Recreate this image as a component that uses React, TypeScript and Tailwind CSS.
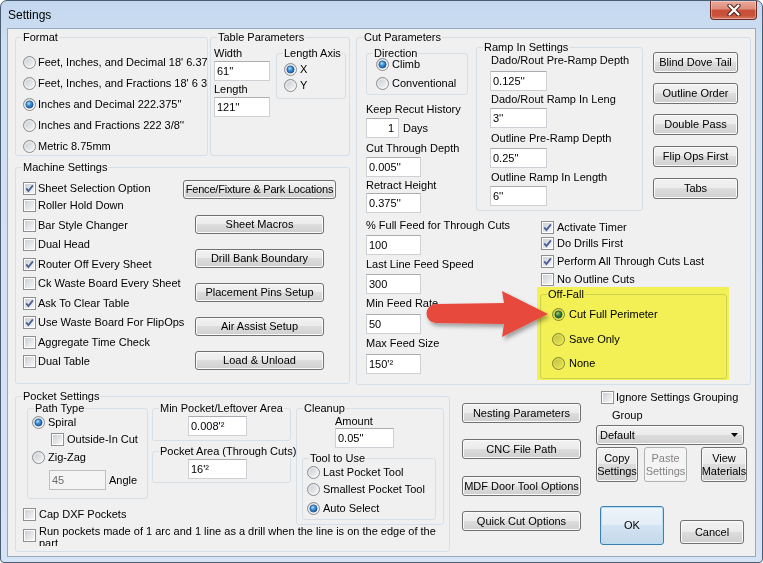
import React from "react";

const BTN =
  "border-[#707070] bg-[linear-gradient(to_bottom,#f2f2f2_0%,#ebebeb_49%,#dddddd_50%,#cfcfcf_100%)] shadow-[inset_0_0_0_1px_#fbfbfb]";

function Radio({ on }: { on?: boolean }) {
  return (
    <svg width="13" height="13" viewBox="0 0 13 13" className="shrink-0">
      <circle cx="6.5" cy="6.5" r="6" fill="url(#rbg)" stroke="#8b8e92" />
      <circle cx="6.5" cy="6.5" r="4.6" fill="none" stroke="#ffffff" strokeOpacity="0.6" />
      {on && <circle cx="6.5" cy="6.5" r="3.6" fill="url(#rdot)" stroke="#1d4e86" strokeWidth="0.7" />}
    </svg>
  );
}

function Check({ on }: { on?: boolean }) {
  return (
    <svg width="13" height="13" viewBox="0 0 13 13" className="shrink-0">
      <rect x="0.5" y="0.5" width="12" height="12" fill="#fff" stroke="#8e8f8f" />
      <rect x="2" y="2" width="9" height="9" fill="url(#cbg)" />
      {on && <path d="M3.2 6.4 L5.4 9 L9.9 3.4" stroke="#4a5f97" strokeWidth="1.8" fill="none" />}
    </svg>
  );
}

function Group({ label, className = "", children }: { label: string; className?: string; children?: React.ReactNode }) {
  return (
    <fieldset className={`min-w-0 shrink-0 border border-[#d5dfe5] rounded-[3px] ${className}`}>
      <legend className="ml-[6px] px-[1px] leading-[13px] whitespace-nowrap">{label}</legend>
      {children}
    </fieldset>
  );
}

function RadioRow({ label, on, className = "", gap = "ml-[3px]" }: { label: string; on?: boolean; className?: string; gap?: string }) {
  return (
    <div className={`flex items-center h-[16px] whitespace-nowrap ${className}`}>
      <Radio on={on} />
      <span className={`leading-[13px] ${gap}`}>{label}</span>
    </div>
  );
}

function CheckRow({ label, on, className = "", gap = "ml-[3px]" }: { label: string; on?: boolean; className?: string; gap?: string }) {
  return (
    <div className={`flex items-center h-[16px] whitespace-nowrap ${className}`}>
      <Check on={on} />
      <span className={`leading-[13px] ${gap}`}>{label}</span>
    </div>
  );
}

function Btn({ children, className = "", disabled, focus }: { children: React.ReactNode; className?: string; disabled?: boolean; focus?: boolean }) {
  const skin = disabled
    ? "border-[#adb2b5] bg-[#f4f4f4] text-[#838383]"
    : focus
    ? "border-[#3c7fb1] bg-[linear-gradient(to_bottom,#edf4fa_0%,#e3edf6_49%,#d3e3f1_50%,#c4d9ea_100%)] shadow-[inset_0_0_0_1px_#b6def5]"
    : BTN;
  return (
    <button type="button" className={`shrink-0 flex items-center justify-center text-center leading-[13px] rounded-[3px] border ${skin} ${className}`}>
      {children}
    </button>
  );
}

function Field({ value, className = "", disabled, right }: { value: string; className?: string; disabled?: boolean; right?: boolean }) {
  const skin = disabled ? "bg-[#f4f4f4] text-[#6d6d6d] border-[#bcc0c5]" : "bg-white border-[#cdd1d6] border-t-[#abadb3]";
  return (
    <div className={`shrink-0 h-[20px] flex items-center border whitespace-nowrap ${skin} ${right ? "justify-end pr-[4px]" : "pl-[2px]"} ${className}`}>
      {value}
    </div>
  );
}

const machineChecks: [string, boolean, string][] = [
  ["Sheet Selection Option", true, "mt-[6px]"],
  ["Roller Hold Down", false, "mt-[1px]"],
  ["Bar Style Changer", false, "mt-[4px]"],
  ["Dual Head", false, "mt-[3px]"],
  ["Router Off Every Sheet", true, "mt-[4px]"],
  ["Ck Waste Board Every Sheet", false, "mt-[3px]"],
  ["Ask To Clear Table", true, "mt-[4px]"],
  ["Use Waste Board For FlipOps", true, "mt-[3px]"],
  ["Aggregate Time Check", false, "mt-[4px]"],
  ["Dual Table", false, "mt-[3px]"],
];

const machineButtons: [string, string][] = [
  ["Sheet Macros", "mt-[16px]"],
  ["Drill Bank Boundary", "mt-[15px]"],
  ["Placement Pins Setup", "mt-[15px]"],
  ["Air Assist Setup", "mt-[15px]"],
  ["Load & Unload", "mt-[15px]"],
];

const cutFields: [string, string, string, string][] = [
  ["Cut Through Depth", "mt-[4px]", "0.005''", "mt-[2px]"],
  ["Retract Height", "mt-[2px]", "0.375''", "mt-[1px]"],
  ["% Full Feed for Through Cuts", "mt-[6px]", "100", "mt-[3px]"],
  ["Last Line Feed Speed", "mt-[3px]", "300", "mt-[3px]"],
  ["Min Feed Rate", "mt-[3px]", "50", "mt-[4px]"],
  ["Max Feed Size", "mt-[3px]", "150'²", "mt-[4px]"],
];

const rampFields: [string, string, string, string][] = [
  ["Dado/Rout Pre-Ramp Depth", "mt-[0px]", "0.125''", "mt-[4px]"],
  ["Dado/Rout Ramp In Leng", "mt-[2px]", "3''", "mt-[2px]"],
  ["Outline Pre-Ramp Depth", "mt-[4px]", "0.25''", "mt-[3px]"],
  ["Outline Ramp In Length", "mt-[3px]", "6''", "mt-[2px]"],
];

const cutButtons: [string, string][] = [
  ["Blind Dove Tail", "mt-[8px]"],
  ["Outline Order", "mt-[10px]"],
  ["Double Pass", "mt-[10px]"],
  ["Flip Ops First", "mt-[11px]"],
  ["Tabs", "mt-[11px]"],
];

const cutChecks: [string, boolean, string][] = [
  ["Activate Timer", true, "mt-[8px]"],
  ["Do Drills First", true, "mt-[0px]"],
  ["Perform All Through Cuts Last", true, "mt-[2px]"],
  ["No Outline Cuts", false, "mt-[2px]"],
];

const sideButtons: [string, string][] = [
  ["Nesting Parameters", "mt-[13px]"],
  ["CNC File Path", "mt-[16px]"],
  ["MDF Door Tool Options", "mt-[17px]"],
  ["Quick Cut Options", "mt-[15px]"],
];

export default function App() {
  return (
    <div className="relative w-[763px] h-[563px] overflow-hidden bg-white font-['Liberation_Sans',Arial,sans-serif] text-[11px] text-black">
      <svg className="absolute w-0 h-0">
        <defs>
          <linearGradient id="rbg" x1="0" y1="0" x2="1" y2="1">
            <stop offset="0" stopColor="#c3c7cc" />
            <stop offset="1" stopColor="#fbfbfb" />
          </linearGradient>
          <radialGradient id="rdot" cx="0.4" cy="0.35" r="0.7">
            <stop offset="0" stopColor="#b9e2fb" />
            <stop offset="0.45" stopColor="#3a8fd8" />
            <stop offset="1" stopColor="#1a559c" />
          </radialGradient>
          <linearGradient id="cbg" x1="0" y1="0" x2="1" y2="1">
            <stop offset="0" stopColor="#cbcfd5" />
            <stop offset="1" stopColor="#f7f7f7" />
          </linearGradient>
          <filter id="shadow" x="-10%" y="-10%" width="130%" height="140%">
            <feDropShadow dx="2" dy="3" stdDeviation="2" floodColor="#000" floodOpacity="0.35" />
          </filter>
        </defs>
      </svg>

      {/* window frame */}
      <div className="w-full h-full flex flex-col rounded-t-[7px] rounded-b-[4px] border border-[#4a5c71] bg-[linear-gradient(to_bottom,#c3d7ef_0px,#cfdff2_40px,#d5e3f4_100%)]">
        <div className="h-[27px] flex items-start justify-between">
          <span className="pl-[7px] pt-[7px] text-[12px] leading-[15px]">Settings</span>
          <div className="mr-[5px] w-[47px] h-[19px] rounded-b-[4px] border border-t-0 border-[#6b2b22] bg-[linear-gradient(to_bottom,#e9aa9c_0%,#dc8c7b_45%,#c94f39_50%,#c75239_80%,#d97a62_100%)] shadow-[inset_0_0_0_1px_rgba(255,255,255,0.35)] flex items-center justify-center">
            <svg width="14" height="12" viewBox="0 0 14 12">
              <path d="M2.5 1.5 L11.5 10.5 M11.5 1.5 L2.5 10.5" stroke="#4a1f19" strokeWidth="4.2" strokeLinecap="round" />
              <path d="M2.5 1.5 L11.5 10.5 M11.5 1.5 L2.5 10.5" stroke="#ffffff" strokeWidth="2.3" strokeLinecap="round" />
            </svg>
          </div>
        </div>

        {/* client area */}
        <div className="mx-[6px] h-[529px] border border-[#97a9be] bg-[#f0f0f0] pl-[7px] pt-[2px]">
          <div className="flex items-start">
            {/* left column */}
            <div className="w-[335px] flex flex-col">
              <div className="flex">
                <Group label="Format" className="w-[193px] h-[125px]">
                  <div className="pt-[8px] flex flex-col overflow-hidden">
                    {[
                      ["Feet, Inches, and Decimal 18' 6.375''", false],
                      ["Feet, Inches, and Fractions 18' 6 3/8''", false],
                      ["Inches and Decimal 222.375''", true],
                      ["Inches and Fractions 222 3/8''", false],
                      ["Metric 8.75mm", false],
                    ].map(([l, on]) => (
                      <RadioRow key={l as string} label={l as string} on={on as boolean} className="h-[21px] pl-[7px]" gap="ml-[2px]" />
                    ))}
                  </div>
                </Group>
                <Group label="Table Parameters" className="ml-[2px] w-[140px] h-[125px]">
                  <div className="flex items-start">
                    <div className="ml-[3px] flex flex-col">
                      <div className="mt-[3px] leading-[13px]">Width</div>
                      <Field value="61''" className="mt-[1px] w-[56px]" />
                      <div className="mt-[2px] leading-[13px]">Length</div>
                      <Field value="121''" className="mt-[1px] w-[56px]" />
                    </div>
                    <Group label="Length Axis" className="ml-[6px] mt-[3px] w-[70px] h-[52px]">
                      <div className="pl-[7px] flex flex-col">
                        <RadioRow label="X" on className="mt-[1px]" />
                        <RadioRow label="Y" />
                      </div>
                    </Group>
                  </div>
                </Group>
              </div>

              <Group label="Machine Settings" className="mt-[5px] w-[335px] h-[223px]">
                <div className="flex items-start">
                  <div className="w-[167px] pl-[7px] flex flex-col">
                    {machineChecks.map(([l, on, mt]) => (
                      <CheckRow key={l} label={l} on={on} className={mt} gap="ml-[2px]" />
                    ))}
                  </div>
                  <div className="w-[153px] flex flex-col items-center whitespace-nowrap">
                    <Btn className="mt-[6px] w-[153px] h-[19px] tracking-[-0.2px]">Fence/Fixture &amp; Park Locations</Btn>
                    {machineButtons.map(([l, mt]) => (
                      <Btn key={l} className={`${mt} w-[129px] h-[19px]`}>
                        {l}
                      </Btn>
                    ))}
                  </div>
                </div>
              </Group>
            </div>

            {/* cut parameters */}
            <Group label="Cut Parameters" className="ml-[6px] w-[395px] h-[354px]">
              <div className="flex items-start">
                <div className="ml-[9px] w-[102px] flex flex-col whitespace-nowrap">
                  <Group label="Direction" className="mt-[3px] w-[102px] h-[48px]">
                    <div className="pl-[9px] flex flex-col">
                      <RadioRow label="Climb" on className="mt-[-4px]" />
                      <RadioRow label="Conventional" className="mt-[3px]" />
                    </div>
                  </Group>
                  <div className="mt-[8px] leading-[13px]">Keep Recut History</div>
                  <div className="mt-[2px] flex items-center">
                    <Field value="1" right className="w-[33px]" />
                    <span className="ml-[4px]">Days</span>
                  </div>
                  {cutFields.map(([l, lm, v, im]) => (
                    <React.Fragment key={l}>
                      <div className={`${lm} leading-[13px]`}>{l}</div>
                      <Field value={v} className={`${im} w-[55px]`} />
                    </React.Fragment>
                  ))}
                </div>

                <div className="ml-[8px] flex flex-col">
                  <div className="flex items-start">
                    <Group label="Ramp In Settings" className="mt-[-3px] w-[167px] h-[170px]">
                      <div className="pl-[13px] flex flex-col whitespace-nowrap">
                        {rampFields.map(([l, lm, v, im]) => (
                          <React.Fragment key={l}>
                            <div className={`${lm} ml-[1px] leading-[13px]`}>{l}</div>
                            <Field value={v} className={`${im} w-[57px]`} />
                          </React.Fragment>
                        ))}
                      </div>
                    </Group>
                    <div className="ml-[10px] flex flex-col whitespace-nowrap">
                      {cutButtons.map(([l, mt]) => (
                        <Btn key={l} className={`${mt} w-[85px] h-[21px]`}>
                          {l}
                        </Btn>
                      ))}
                    </div>
                  </div>
                  <div className="ml-[65px] flex flex-col">
                    {cutChecks.map(([l, on, mt]) => (
                      <CheckRow key={l} label={l} on={on} className={mt} />
                    ))}
                  </div>
                  <div className="ml-[61px] w-[192px] h-[93px] bg-[#f2f055] pt-[1px]">
                    <Group label="Off-Fall" className="ml-[3px] w-[187px] h-[91px] border-[#c9ced3] mix-blend-multiply">
                      <div className="pl-[11px] flex flex-col">
                        <RadioRow label="Cut Full Perimeter" on className="mt-[5px]" gap="ml-[4px]" />
                        <RadioRow label="Save Only" className="mt-[9px]" gap="ml-[4px]" />
                        <RadioRow label="None" className="mt-[8px]" gap="ml-[4px]" />
                      </div>
                    </Group>
                  </div>
                </div>
              </div>
            </Group>
          </div>

          {/* bottom section */}
          <div className="mt-[5px] flex items-start">
            <Group label="Pocket Settings" className="w-[435px] h-[162px]">
              <div className="flex items-start">
                <div className="flex flex-col">
                  <div className="flex items-start">
                    <Group label="Path Type" className="ml-[11px] mt-[-1px] w-[121px] h-[97px]">
                      <div className="flex flex-col">
                        <RadioRow label="Spiral" on className="mt-[-1px] pl-[4px]" />
                        <CheckRow label="Outside-In Cut" className="mt-[1px] ml-[23px]" />
                        <RadioRow label="Zig-Zag" className="mt-[2px] pl-[4px]" />
                        <div className="mt-[5px] ml-[21px] flex items-center">
                          <Field value="45" disabled className="w-[57px]" />
                          <span className="ml-[3px]">Angle</span>
                        </div>
                      </div>
                    </Group>
                    <div className="ml-[4px] flex flex-col">
                      <Group label="Min Pocket/Leftover Area" className="mt-[-1px] w-[139px] h-[39px]">
                        <Field value="0.008'²" className="mt-[1px] ml-[35px] w-[59px] h-[19px]" />
                      </Group>
                      <Group label="Pocket Area (Through Cuts)" className="mt-[4px] w-[139px] h-[38px]">
                        <Field value="16'²" className="mt-[1px] ml-[35px] w-[59px] h-[19px]" />
                      </Group>
                    </div>
                  </div>
                  <CheckRow label="Cap DXF Pockets" className="mt-[7px] ml-[7px]" />
                </div>
                <Group label="Cleanup" className="ml-[5px] mt-[-1px] w-[148px] h-[123px]">
                  <div className="flex flex-col">
                    <div className="ml-[38px] leading-[13px]">Amount</div>
                    <Field value="0.05''" className="ml-[38px] w-[59px]" />
                    <Group label="Tool to Use" className="ml-[5px] mt-[4px] w-[134px] h-[68px]">
                      <div className="pl-[4px] flex flex-col">
                        <RadioRow label="Last Pocket Tool" className="mt-[-1px]" />
                        <RadioRow label="Smallest Pocket Tool" className="mt-[1px]" />
                        <RadioRow label="Auto Select" on className="mt-[3px]" />
                      </div>
                    </Group>
                  </div>
                </Group>
              </div>
              <div className="ml-[7px] h-[21px] flex items-center">
                <Check />
                <div className="ml-[3px] w-[405px] h-[21px] overflow-hidden leading-[12px]">
                  Run pockets made of 1 arc and 1 line as a drill when the line is on the edge of the part
                </div>
              </div>
            </Group>

            <div className="ml-[12px] w-[119px] flex flex-col whitespace-nowrap">
              {sideButtons.map(([l, mt]) => (
                <Btn key={l} className={`${mt} w-[119px] h-[20px]`}>
                  {l}
                </Btn>
              ))}
            </div>

            <div className="ml-[15px] w-[151px] flex flex-col">
              <CheckRow label="Ignore Settings Grouping" className="mt-[-1px] ml-[5px]" gap="ml-[2px]" />
              <div className="mt-[4px] ml-[16px] leading-[13px]">Group</div>
              <div className={`mt-[3px] w-[148px] h-[20px] flex items-center justify-between pl-[3px] pr-[5px] rounded-[3px] border ${BTN}`}>
                <span>Default</span>
                <svg width="7" height="4" viewBox="0 0 7 4">
                  <path d="M0 0 H7 L3.5 4 Z" fill="#000" />
                </svg>
              </div>
              <div className="mt-[2px] flex items-start">
                <Btn className="w-[42px] h-[35px]">
                  Copy
                  <br />
                  Settings
                </Btn>
                <Btn disabled className="ml-[6px] w-[43px] h-[35px]">
                  Paste
                  <br />
                  Settings
                </Btn>
                <Btn className="ml-[14px] w-[46px] h-[35px]">
                  View
                  <br />
                  Materials
                </Btn>
              </div>
              <div className="mt-[24px] flex items-start">
                <Btn focus className="ml-[4px] w-[64px] h-[39px]">
                  OK
                </Btn>
                <Btn className="ml-[16px] mt-[14px] w-[64px] h-[24px]">Cancel</Btn>
              </div>
            </div>
          </div>
        </div>
      </div>

      {/* red callout arrow */}
      <svg className="absolute left-[424px] top-[288px]" width="132" height="58" viewBox="0 0 132 58">
        <path
          d="M12 16 L80 15 L78 3 L124 26 L78 49 L80 36 L12 35 A9.5 9.5 0 0 1 12 16 Z"
          fill="#e8493e"
          filter="url(#shadow)"
        />
      </svg>
    </div>
  );
}
